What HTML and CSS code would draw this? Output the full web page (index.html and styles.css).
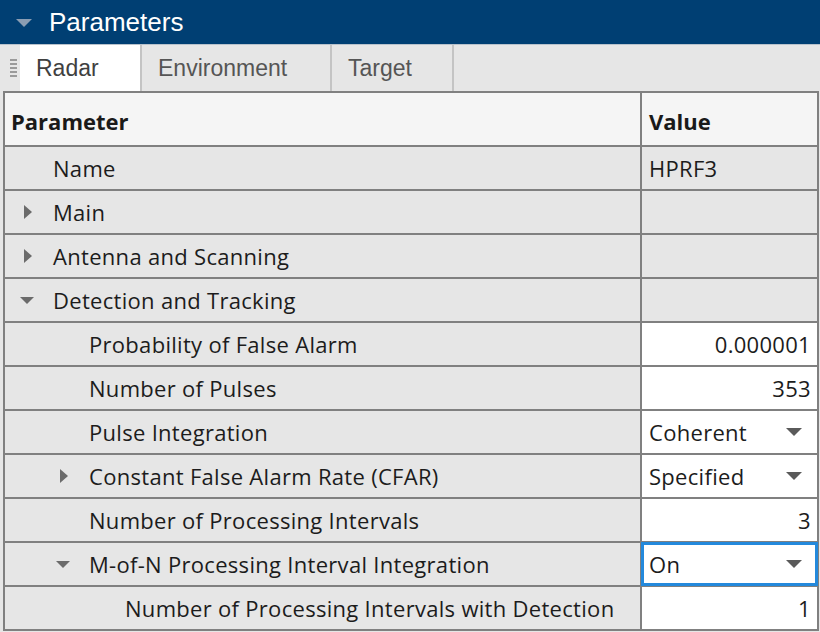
FILE: index.html
```html
<!DOCTYPE html>
<html lang="en">
<head>
  <meta charset="UTF-8">
  <title>Parameters</title>
  <link rel="stylesheet" href="styles.css">
</head>
<body>
  <div class="panel">
    <div class="title-bar">
      <span class="title-arrow"></span>
      <span class="title-text">Parameters</span>
    </div>

    <div class="tab-strip">
      <div class="grip">
        <span></span><span></span><span></span><span></span><span></span>
      </div>
      <div class="tab active">Radar</div>
      <div class="tab">Environment</div>
      <div class="tab">Target</div>
    </div>

    <div class="grid">
      <div class="cell head">Parameter</div>
      <div class="cell head value">Value</div>

      <div class="cell lvl0"><span class="twisty"></span>Name</div>
      <div class="cell value">HPRF3</div>

      <div class="cell lvl0"><span class="twisty closed"></span>Main</div>
      <div class="cell value"></div>

      <div class="cell lvl0"><span class="twisty closed"></span>Antenna and Scanning</div>
      <div class="cell value"></div>

      <div class="cell lvl0"><span class="twisty open"></span>Detection and Tracking</div>
      <div class="cell value"></div>

      <div class="cell lvl1"><span class="twisty"></span>Probability of False Alarm</div>
      <div class="cell value edit num">0.000001</div>

      <div class="cell lvl1"><span class="twisty"></span>Number of Pulses</div>
      <div class="cell value edit num">353</div>

      <div class="cell lvl1"><span class="twisty"></span>Pulse Integration</div>
      <div class="cell value edit drop">Coherent<span class="drop-arrow"></span></div>

      <div class="cell lvl1"><span class="twisty closed"></span>Constant False Alarm Rate (CFAR)</div>
      <div class="cell value edit drop">Specified<span class="drop-arrow"></span></div>

      <div class="cell lvl1"><span class="twisty"></span>Number of Processing Intervals</div>
      <div class="cell value edit num">3</div>

      <div class="cell lvl1"><span class="twisty open"></span>M-of-N Processing Interval Integration</div>
      <div class="cell value edit drop focused">On<span class="drop-arrow"></span></div>

      <div class="cell lvl2"><span class="twisty"></span>Number of Processing Intervals with Detection</div>
      <div class="cell value edit num">1</div>
    </div>
  </div>
</body>
</html>
```

FILE: styles.css
```css
body {
  margin: 0;
  background: #ffffff;
  overflow: hidden;
}

.panel {
  width: 820px;
  height: 632px;
  background: #e6e6e6;
}

.title-bar {
  height: 44px;
  background: #003f73;
  border-bottom: 1px solid #b8c2cc;
  display: flex;
  align-items: center;
  font-family: "Liberation Sans", Arial, sans-serif;
  color: #ffffff;
}

.title-arrow {
  width: 0;
  height: 0;
  margin-left: 16px;
  margin-right: 17px;
  margin-top: 2px;
  border-left: 8px solid transparent;
  border-right: 8px solid transparent;
  border-top: 8px solid #8a9db3;
}

.title-text {
  font-size: 26px;
}

.tab-strip {
  height: 46px;
  display: flex;
  align-items: stretch;
  font-family: "Liberation Sans", Arial, sans-serif;
  font-size: 23px;
  color: #555555;
}

.grip {
  width: 10px;
  display: flex;
  flex-direction: column;
  padding-left: 10px;
  padding-top: 14px;
  gap: 2px;
}

.grip span {
  width: 7px;
  height: 2px;
  background: #9a9a9a;
}

.tab {
  display: flex;
  align-items: center;
  padding: 0 16px;
  border-right: 2px solid #c4c4c4;
}

.tab.active {
  background: #ffffff;
  color: #404040;
  width: 88px;
}

.tab:nth-child(3) {
  width: 156px;
}

.tab:nth-child(4) {
  width: 88px;
}

.grid {
  margin-left: 3px;
  width: 812px;
  display: grid;
  grid-template-columns: 635px 175px;
  grid-template-rows: 52px;
  grid-auto-rows: 42px;
  gap: 2px;
  padding: 2px;
  background: #808080;
  font-family: "Open Sans", "Noto Sans", sans-serif;
  font-size: 22px;
  letter-spacing: 0.3px;
  color: #1c1c1c;
}

.cell {
  background: #e6e6e6;
  display: flex;
  align-items: center;
  white-space: nowrap;
  overflow: hidden;
}

.cell.head {
  background: #f5f5f5;
  font-weight: bold;
  letter-spacing: 0;
  color: #1a1a1a;
  padding-left: 6px;
  padding-top: 4px;
}

.cell.head.value {
  padding-left: 7px;
}

.lvl0 { padding-left: 14px; }
.lvl1 { padding-left: 50px; }
.lvl2 { padding-left: 86px; }

.twisty {
  width: 18px;
  height: 14px;
  margin-right: 16px;
  display: flex;
  align-items: center;
  justify-content: center;
  flex-shrink: 0;
}

.twisty.closed::before {
  content: "";
  border-top: 7px solid transparent;
  border-bottom: 7px solid transparent;
  border-left: 8px solid #6b6b6b;
}

.twisty.open::before {
  content: "";
  margin-left: -2px;
  border-left: 7px solid transparent;
  border-right: 7px solid transparent;
  border-top: 7px solid #6b6b6b;
}

.cell.value {
  padding-left: 7px;
  padding-right: 6px;
}

.cell.edit {
  background: #ffffff;
}

.cell.num {
  justify-content: flex-end;
}

.cell.drop {
  justify-content: space-between;
  padding-right: 15px;
}

.drop-arrow {
  width: 0;
  height: 0;
  border-left: 8px solid transparent;
  border-right: 8px solid transparent;
  border-top: 8px solid #5a5a5a;
}

.cell.focused {
  position: relative;
  z-index: 1;
  box-shadow: inset 0 0 0 2px #2389dc, 0 0 0 1px #2389dc;
}
```
